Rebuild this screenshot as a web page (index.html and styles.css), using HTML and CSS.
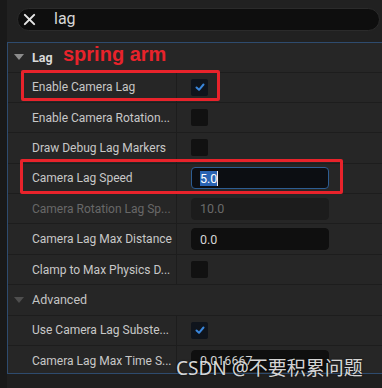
FILE: index.html
```html
<!DOCTYPE html>
<html lang="en">
<head>
<meta charset="UTF-8" />
<meta name="viewport" content="width=device-width, initial-scale=1" />
<title>Details - lag</title>
<link rel="stylesheet" href="styles.css">
</head>
<body>

<div class="app">
  <div class="gutter"></div>

  <div class="content">
    <!-- Barra de búsqueda -->
    <div class="topbar">
      <div class="search">
        <svg class="clear-icon" viewBox="0 0 14 14" fill="none" stroke="currentColor" stroke-width="2.2" stroke-linecap="round">
          <path d="M2 2 L12 12 M12 2 L2 12" />
        </svg>
        <span class="search-text">lag</span>
      </div>
    </div>

    <!-- Panel de propiedades -->
    <div class="panel">
      <div class="cat">
        <svg class="arrow" viewBox="0 0 10 6"><path d="M0 0 H10 L5 6 Z" /></svg>
        <span class="cat-title">Lag</span>
      </div>

      <div class="row">
        <div class="name">Enable Camera Lag</div>
        <div class="value"><span class="check on"><svg viewBox="0 0 12 12" fill="none" stroke="currentColor" stroke-width="2" stroke-linecap="round" stroke-linejoin="round"><path d="M2.5 6.5 L5 8.8 L9.5 3.5" /></svg></span></div>
      </div>
      <div class="row">
        <div class="name">Enable Camera Rotation...</div>
        <div class="value"><span class="check"></span></div>
      </div>
      <div class="row">
        <div class="name">Draw Debug Lag Markers</div>
        <div class="value"><span class="check"></span></div>
      </div>
      <div class="row">
        <div class="name">Camera Lag Speed</div>
        <div class="value"><span class="num focus"><span class="sel">5.0</span><span class="caret"></span></span></div>
      </div>
      <div class="row">
        <div class="name disabled">Camera Rotation Lag Sp...</div>
        <div class="value"><span class="num off">10.0</span></div>
      </div>
      <div class="row">
        <div class="name">Camera Lag Max Distance</div>
        <div class="value"><span class="num">0.0</span></div>
      </div>
      <div class="row">
        <div class="name">Clamp to Max Physics D...</div>
        <div class="value"><span class="check"></span></div>
      </div>

      <div class="cat sub">
        <svg class="arrow" viewBox="0 0 10 6"><path d="M0 0 H10 L5 6 Z" /></svg>
        <span class="cat-title">Advanced</span>
      </div>

      <div class="row">
        <div class="name">Use Camera Lag Subste...</div>
        <div class="value"><span class="check on"><svg viewBox="0 0 12 12" fill="none" stroke="currentColor" stroke-width="2" stroke-linecap="round" stroke-linejoin="round"><path d="M2.5 6.5 L5 8.8 L9.5 3.5" /></svg></span></div>
      </div>
      <div class="row">
        <div class="name">Camera Lag Max Time S...</div>
        <div class="value"><span class="num">0.016667</span></div>
      </div>
    </div>
  </div>
</div>

<!-- Anotaciones -->
<div class="note-text">spring arm</div>
<div class="note-box box-a"></div>
<div class="note-box box-b"></div>
<div class="watermark">CSDN @不要积累问题</div>

</body>
</html>
```

FILE: styles.css
```css
/* Reset */
* {
  margin: 0; padding: 0; box-sizing: border-box;
}
html, body {
  width: 382px;
  height: 388px;
  overflow: hidden;
}
body {
  position: relative;
  font-family: Roboto, "Liberation Sans", sans-serif;
  font-size: 12px;
  color: #c8c8c8;
  background: #1f1f1f;
}

.app {
  display: flex;
  height: 100%;
}
.gutter {
  width: 7px;
  background: #191919;
}
.content {
  flex: 1;
  min-width: 0;
}

/* Búsqueda */
.topbar {
  height: 42px;
  background: #212121;
  padding: 8px 0 0 10px;
}
.search {
  width: 363px;
  height: 23px;
  border-radius: 12px;
  background: #0e0e0e;
  border: 1px solid #2b2b2b;
  display: flex;
  align-items: center;
  padding-left: 5px;
}
.clear-icon {
  width: 13px;
  height: 13px;
  color: #e6e6e6;
}
.search-text {
  margin-left: 18px;
  font-size: 16px;
  color: #d6d6d6;
  position: relative;
  top: -1px;
}

/* Panel */
.panel {
  height: 332px;
  overflow: hidden;
  background: #262626;
  border-top: 1px solid #2e4b6e;
  border-left: 1px solid #2e4b6e;
  border-bottom: 1px solid #2e4b6e;
}
.cat {
  height: 28.5px;
  display: flex;
  align-items: center;
  padding-left: 6px;
}
.cat.sub {
  height: 30.4px;
  border-top: 1px solid #1d1d1d;
}
.arrow {
  width: 10px;
  height: 6px;
  fill: #8c8c8c;
  margin-right: 8px;
}
.cat-title {
  font-weight: 700;
  font-size: 12.5px;
  color: #dadada;
}
.cat.sub .arrow {
  fill: #4e4e4e;
}
.cat.sub .cat-title {
  font-weight: 400;
  color: #c4c4c4;
}

.row {
  height: 30.4px;
  display: grid;
  grid-template-columns: 168px 1fr;
  border-top: 1px solid #1d1d1d;
}
.name {
  display: flex;
  align-items: center;
  padding-left: 24px;
  white-space: nowrap;
}
.name.disabled {
  color: #686868;
}
.value {
  display: flex;
  align-items: center;
  padding-left: 14px;
  border-left: 1px solid #1d1d1d;
}

.check {
  width: 17px;
  height: 17px;
  border-radius: 2px;
  background: #111;
  display: flex;
  align-items: center;
  justify-content: center;
  color: #3a86db;
}
.check svg {
  width: 12px;
  height: 12px;
}
.check.on {
  background: #0f141c;
}

.num {
  width: 138px;
  height: 22px;
  border-radius: 4px;
  background: #0f0f0f;
  border: 1px solid #0f0f0f;
  display: flex;
  align-items: center;
  padding-left: 8px;
  font-size: 12.5px;
  color: #d4d4d4;
}
.num.off {
  background: #1c1c1c;
  border-color: #1c1c1c;
  color: #6a6a6a;
}
.num.focus {
  border-color: #2d5d92;
  background: #0c0e12;
}
.sel {
  background: #2963b3;
  color: #fff;
  line-height: 15px;
}
.caret {
  width: 1px;
  height: 15px;
  background: #eee;
}

/* Anotaciones */
.note-text {
  position: absolute;
  left: 63px;
  top: 43px;
  font-family: "Liberation Sans", sans-serif;
  font-size: 20px;
  font-weight: 700;
  color: #e8232b;
}
.note-box {
  position: absolute;
  border: 3px solid #e8232b;
  border-radius: 2px;
}
.box-a {
  left: 21px;
  top: 70px;
  width: 199px;
  height: 31px;
}
.box-b {
  left: 20px;
  top: 159px;
  width: 323px;
  height: 35px;
}
.watermark {
  position: absolute;
  left: 176px;
  top: 353px;
  font-family: "Noto Sans", "Noto Sans CJK SC", sans-serif;
  font-size: 19px;
  color: rgba(240, 240, 240, 0.9);
  text-shadow: 0 0 2px rgba(0, 0, 0, 0.6);
  white-space: nowrap;
}
```
